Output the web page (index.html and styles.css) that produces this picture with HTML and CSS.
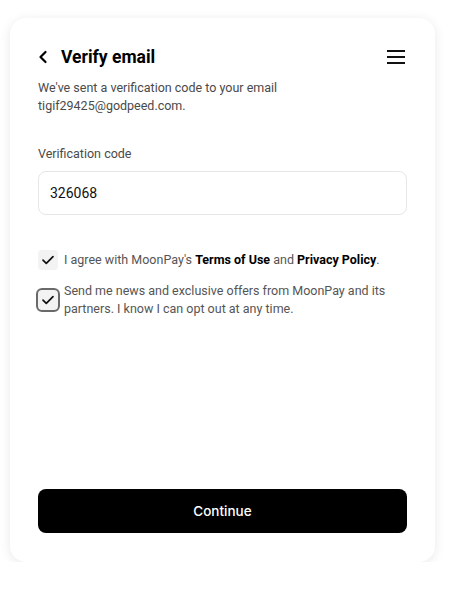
FILE: index.html
```html
<!DOCTYPE html>
<html>
<head>
<meta charset="utf-8">
<link rel="stylesheet" href="styles.css">
</head>
<body>
<div class="card">
  <div class="header">
    <div class="title-wrap">
      <svg class="back" width="10" height="14" viewBox="0 0 10 14"><path d="M7.5 2 L2.5 7 L7.5 12" fill="none" stroke="#000" stroke-width="2.2" stroke-linecap="round" stroke-linejoin="round"/></svg>
      <h1 class="title">Verify email</h1>
    </div>
    <svg class="menu" width="20" height="16" viewBox="0 0 20 16"><path d="M1 2H19M1 8H19M1 14H19" stroke="#111" stroke-width="2"/></svg>
  </div>
  <p class="desc">We've sent a verification code to your email<br>tigif29425@godpeed.com.</p>
  <label class="label">Verification code</label>
  <div class="input">326068</div>
  <div class="check-row one">
    <span class="box"><svg width="14" height="12" viewBox="0 0 14 12"><path d="M2 6.2 L5.3 9.4 L12 2.6" fill="none" stroke="#111" stroke-width="1.7" stroke-linecap="round" stroke-linejoin="round"/></svg></span>
    <span class="ctext">I agree with MoonPay's <b>Terms of Use</b> and <b>Privacy Policy</b>.</span>
  </div>
  <div class="check-row two">
    <span class="box focus"><svg width="14" height="12" viewBox="0 0 14 12"><path d="M2 6.2 L5.3 9.4 L12 2.6" fill="none" stroke="#111" stroke-width="1.7" stroke-linecap="round" stroke-linejoin="round"/></svg></span>
    <span class="ctext">Send me news and exclusive offers from MoonPay and its partners. I know I can opt out at any time.</span>
  </div>
  <div class="spacer"></div>
  <button class="btn">Continue</button>
</div>
</body>
</html>
```
FILE: styles.css
```css
* { box-sizing: border-box; }
html, body { margin: 0; padding: 0; background: #fff; }
body { font-family: Roboto, "Noto Sans", sans-serif; }
.card {
  margin: 18px 0 0 10px;
  width: 425px;
  height: 544px;
  background: #fff;
  border-radius: 16px;
  box-shadow: 0 2px 12px rgba(0,0,0,0.09);
  padding: 27px 28px 29px 28px;
  display: flex;
  flex-direction: column;
}
.header {
  height: 24px;
  display: flex;
  align-items: center;
  justify-content: space-between;
}
.title-wrap { display: flex; align-items: center; }
.back { margin-right: 13px; }
.title {
  margin: 0;
  font-size: 17.5px;
  font-weight: 700;
  color: #000;
  line-height: 24px;
}
.menu { margin-right: 1px; }
.desc {
  margin: 10px 0 0 0;
  font-size: 12.5px;
  font-weight: 400;
  line-height: 18px;
  color: #4a4a4a;
}
.label {
  display: block;
  margin-top: 30px;
  font-size: 12.5px;
  font-weight: 400;
  line-height: 18px;
  color: #4a4a4a;
}
.input {
  margin-top: 8px;
  height: 44px;
  border: 1px solid #e6e6e6;
  border-radius: 8px;
  padding: 0 11px;
  display: flex;
  align-items: center;
  font-size: 14px;
  color: #111;
}
.check-row {
  display: flex;
  align-items: center;
  font-size: 12.5px;
  line-height: 18px;
  color: #555;
}
.check-row b { color: #000; font-weight: 700; }
.check-row.one { margin-top: 35px; }
.check-row.two { margin-top: 12px; }
.box {
  flex: none;
  width: 20px;
  height: 20px;
  border-radius: 4px;
  background: #f3f3f3;
  display: flex;
  align-items: center;
  justify-content: center;
  margin-right: 6px;
}
.box.focus {
  width: 24px;
  height: 24px;
  margin-left: -2px;
  margin-right: 4px;
  border: 2.5px solid #6a6a6a;
  border-radius: 6px;
}
.spacer { flex: 1; }
.btn {
  height: 44px;
  border: none;
  border-radius: 8px;
  background: #000;
  color: #fff;
  font-family: Inter, Roboto, sans-serif;
  font-size: 13.5px;
  font-weight: 500;
  width: 100%;
}
```
